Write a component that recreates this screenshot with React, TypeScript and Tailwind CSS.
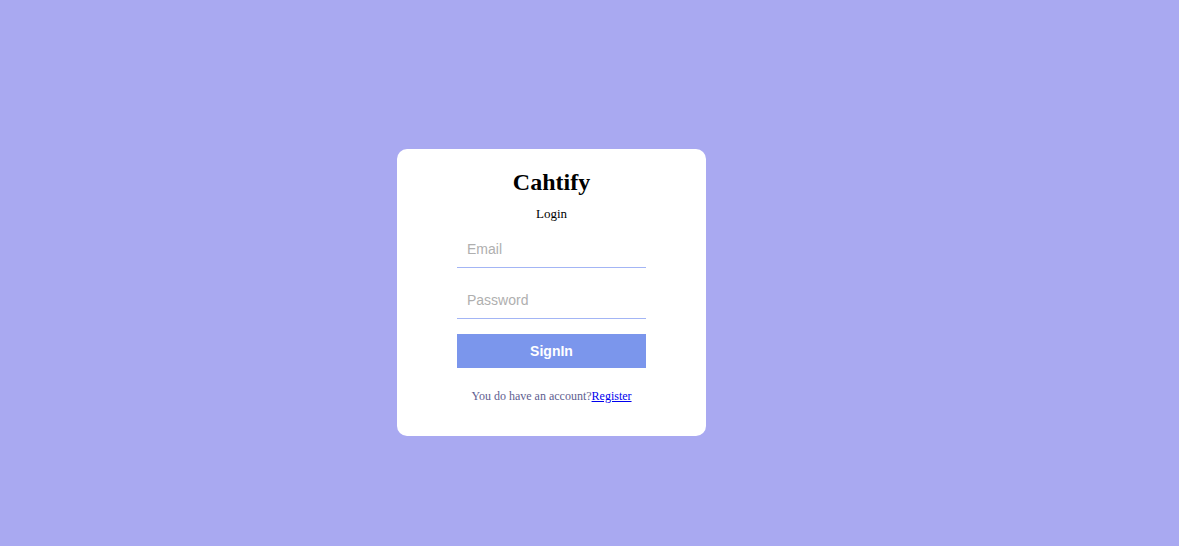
import React, { useState } from 'react';

export default function App() {
  const [email, setEmail] = useState('');
  const [password, setPassword] = useState('');

  return (
    <div className="min-h-screen w-full bg-[#a9a9f1] flex items-center justify-center pr-[76px] pt-[39px]">
      <div className="w-[309px] bg-white rounded-[10px] px-[60px] pt-[19px] pb-[33px] flex flex-col items-center">
        <h1 className="text-[24px] font-bold leading-[28px] text-black font-['Liberation_Serif','Times_New_Roman',serif]">
          Cahtify
        </h1>
        <span className="mt-[11px] text-[13px] leading-[14px] text-black font-['Liberation_Serif','Times_New_Roman',serif]">
          Login
        </span>
        <form className="w-full mt-[9px] flex flex-col" onSubmit={(e) => e.preventDefault()}>
          <input
            type="email"
            placeholder="Email"
            value={email}
            onChange={(e) => setEmail(e.target.value)}
            className="w-full h-[38px] pt-[1px] px-[10px] border-b border-[#a3b5f5] outline-none text-[14px] font-['Liberation_Sans',Arial,sans-serif] placeholder:text-[#afafaf]"
          />
          <input
            type="password"
            placeholder="Password"
            value={password}
            onChange={(e) => setPassword(e.target.value)}
            className="w-full h-[38px] pt-[1px] mt-[13px] px-[10px] border-b border-[#a3b5f5] outline-none text-[14px] font-['Liberation_Sans',Arial,sans-serif] placeholder:text-[#afafaf]"
          />
          <button
            type="submit"
            className="w-full h-[34px] pt-[1px] mt-[15px] bg-[#7b96ec] text-white text-[14px] font-bold font-['Liberation_Sans',Arial,sans-serif]"
          >
            SignIn
          </button>
        </form>
        <p className="mt-[21px] text-[12px] leading-[14px] text-[#5e5e90] font-['Liberation_Serif','Times_New_Roman',serif]">
          You do have an account?
          <a href="#" className="text-[#0000ee] underline">
            Register
          </a>
        </p>
      </div>
    </div>
  );
}
